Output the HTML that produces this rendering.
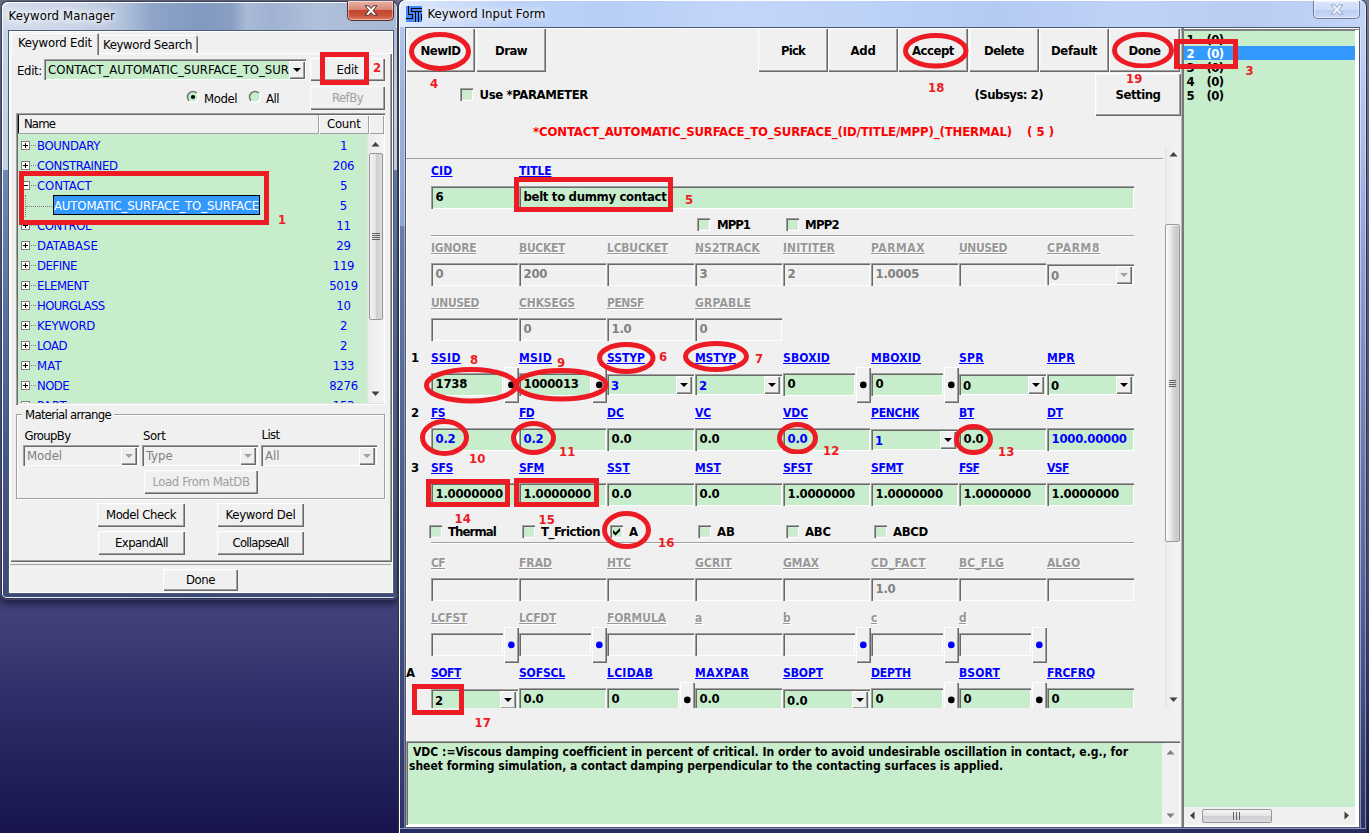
<!DOCTYPE html>
<html><head><meta charset="utf-8"><title>Keyword Input Form</title>
<style>
html,body{margin:0;padding:0;}
body{width:1369px;height:833px;overflow:hidden;position:relative;font-family:"DejaVu Sans Condensed","Liberation Sans",sans-serif;font-size:13px;
background:linear-gradient(to bottom,#7a7a92 0,#56567f 300px,#45457e 600px,#2f2e68 700px,#18154d 833px);}
#root{position:absolute;left:0;top:0;width:1369px;height:833px;overflow:hidden;}
#root div,#root span.t,#root svg{position:absolute;}
#root div{box-sizing:border-box;}
span.t{white-space:pre;}
</style></head>
<body><div id="root">
<div style="left:0px;top:0px;width:399px;height:600px;border-radius:8px 8px 7px 7px;background:rgba(60,64,90,.45);box-shadow:0 3px 9px 1px rgba(8,8,35,.7);"></div>
<div style="left:1px;top:1px;width:397px;height:598px;border-radius:7px 7px 6px 6px;background:linear-gradient(to bottom,#3a4258 0,#2a3350 100%);"></div>
<div style="left:2px;top:2px;width:395px;height:596px;border-radius:6px 6px 5px 5px;background:linear-gradient(to right,#d3dcec 0,#c9d4e7 20%,#b4c3dc 30%,#8ea4c9 38%,#8299c1 50%,#889ec4 58%,#a9bad7 62%,#a0b2d2 68%,#b0c0db 80%,#a7b8d5 100%);box-shadow:inset 1px 1px 0 rgba(255,255,255,.9),inset -1px -1px 0 rgba(255,255,255,.55);"></div>
<div style="left:3px;top:28px;width:5px;height:567px;background:linear-gradient(to bottom,#c9d5e8 0,#c3cfe4 142px,#7088b5 142px,#5f76a6 250px,#46578a 430px,#3d4c76 567px);"></div>
<div style="left:394px;top:28px;width:3px;height:567px;background:linear-gradient(to bottom,#a9bad7 0,#c0cce0 60px,#c0cce0 142px,#5f76a6 142px,#4f6394 300px,#3d4c76 567px);"></div>
<div style="left:3px;top:594px;width:394px;height:3px;background:#3d4c76;border-radius:0 0 3px 3px;"></div>
<div style="left:8px;top:30px;width:386px;height:564px;background:#f0f0f0;border:1px solid #4d5a74;box-shadow:inset 1px 1px 0 #fff,inset -1px -1px 0 #fff;"></div>
<span id="t0" class="t" style="left:8.5px;top:8px;font-size:13px;line-height:16px;color:#000;letter-spacing:0.109px;text-shadow:0 0 6px #fff,0 0 8px #fff,0 0 10px #fff;">Keyword Manager</span>
<div style="left:347px;top:1px;width:47px;height:20px;border-radius:0 0 5px 5px;border:1px solid #5a2a2a;border-top:none;background:linear-gradient(to bottom,#e8b4a8 0,#d98876 45%,#c4452e 50%,#c9523a 75%,#dd7c62 100%);box-shadow:inset 0 0 0 1px rgba(255,255,255,.45);"></div>
<svg style="left:364px;top:5px;" width="14" height="11" viewBox="0 0 14 11"><path d="M1 0.8 L4.9 0.8 L7 3.5 L9.1 0.8 L13 0.8 L9 5.5 L13 10.2 L9.1 10.2 L7 7.5 L4.9 10.2 L1 10.2 L5 5.5 Z" fill="#fff" stroke="#4a2e2e" stroke-width="1"/></svg>
<div style="left:10px;top:53px;width:382px;height:509px;background:#f0f0f0;box-shadow:inset 1px 1px 0 #fff,inset -1px -1px 0 #696969,inset -2px -2px 0 #a0a0a0;"></div>
<div style="left:11px;top:33px;width:88px;height:22px;background:#f0f0f0;border-radius:2px 2px 0 0;box-shadow:inset 1px 1px 0 #fff,inset -1px 0 0 #696969,inset -2px 0 0 #a0a0a0;"></div>
<div style="left:12px;top:53px;width:85px;height:3px;background:#f0f0f0;"></div>
<span id="t1" class="t" style="left:18px;top:35px;font-size:13px;line-height:16px;color:#000;letter-spacing:-0.186px;">Keyword Edit</span>
<div style="left:99px;top:35px;width:99px;height:18px;background:#f0f0f0;border-radius:2px 2px 0 0;box-shadow:inset 0 1px 0 #fff,inset -1px 0 0 #696969,inset -2px 0 0 #a0a0a0;"></div>
<span id="t2" class="t" style="left:103px;top:37px;font-size:13px;line-height:16px;color:#000;letter-spacing:-0.338px;">Keyword Search</span>
<div style="left:10px;top:564px;width:381px;height:1px;background:#a0a0a0;"></div>
<span id="t3" class="t" style="left:17px;top:63px;font-size:13px;line-height:16px;color:#000;letter-spacing:-0.319px;">Edit:</span>
<div style="left:44px;top:59px;width:262px;height:21px;background:#c7edcc;box-shadow:inset 1px 1px 0 #a0a0a0,inset 2px 2px 0 #696969,inset -1px -1px 0 #fff;"></div>
<span id="t4" class="t" style="left:48px;top:62px;font-size:13px;line-height:16px;color:#000;letter-spacing:0.003px;">CONTACT_AUTOMATIC_SURFACE_TO_SUR</span>
<div style="left:289px;top:61px;width:16px;height:18px;background:#f0f0f0;box-shadow:inset 1px 1px 0 #fff,inset -1px -1px 0 #696969,inset -2px -2px 0 #a0a0a0;"></div>
<svg style="left:292px;top:66px;" width="10" height="8" viewBox="0 0 10 8"><path d="M1 2 L9 2 L5 6 Z" fill="#000"/></svg>
<div style="left:310px;top:58px;width:75px;height:23px;background:#f0f0f0;box-shadow:inset 1px 1px 0 #fff,inset -1px -1px 0 #696969,inset -2px -2px 0 #a0a0a0,inset 2px 2px 0 #f4f4f4;"></div>
<span id="t5" class="t" style="left:347.5px;top:62px;font-size:13px;line-height:16px;color:#000;letter-spacing:-0.164px;transform:translateX(-50%);">Edit</span>
<div style="left:310px;top:86px;width:75px;height:24px;background:#f0f0f0;box-shadow:inset 1px 1px 0 #fff,inset -1px -1px 0 #696969,inset -2px -2px 0 #a0a0a0,inset 2px 2px 0 #f4f4f4;"></div>
<span id="t6" class="t" style="left:347.5px;top:90px;font-size:13px;line-height:16px;color:#a0a0a0;letter-spacing:-0.559px;transform:translateX(-50%);">RefBy</span>
<svg style="left:186px;top:90px;" width="14" height="14" viewBox="0 0 14 14"><circle cx="7" cy="7" r="5.2" fill="#c7edcc"/><path d="M3.1 10.9 A5.5 5.5 0 0 1 10.9 3.1" fill="none" stroke="#767676" stroke-width="1.5"/><path d="M10.9 3.1 A5.5 5.5 0 0 1 3.1 10.9" fill="none" stroke="#fff" stroke-width="1.5"/><circle cx="7" cy="7" r="2.1" fill="#000"/></svg>
<span id="t7" class="t" style="left:204px;top:91px;font-size:13px;line-height:16px;color:#000;letter-spacing:-0.425px;">Model</span>
<svg style="left:248px;top:90px;" width="14" height="14" viewBox="0 0 14 14"><circle cx="7" cy="7" r="5.2" fill="#c7edcc"/><path d="M3.1 10.9 A5.5 5.5 0 0 1 10.9 3.1" fill="none" stroke="#767676" stroke-width="1.5"/><path d="M10.9 3.1 A5.5 5.5 0 0 1 3.1 10.9" fill="none" stroke="#fff" stroke-width="1.5"/></svg>
<span id="t8" class="t" style="left:266px;top:91px;font-size:13px;line-height:16px;color:#000;letter-spacing:-0.500px;">All</span>
<div style="left:16px;top:113px;width:369px;height:292px;background:#fff;box-shadow:inset 1px 1px 0 #a0a0a0,inset 2px 2px 0 #696969,inset -1px -1px 0 #fff,inset -2px -2px 0 #e3e3e3;"></div>
<div style="left:18px;top:134px;width:349px;height:269px;background:#c7edcc;"></div>
<div style="left:18px;top:115px;width:301px;height:19px;background:#f0f0f0;box-shadow:inset -1px -1px 0 #a0a0a0,inset 1px 0 0 #000;"></div>
<div style="left:319px;top:115px;width:50px;height:19px;background:#f0f0f0;box-shadow:inset 1px 1px 0 #fff,inset -1px -1px 0 #a0a0a0;"></div>
<div style="left:369px;top:115px;width:15px;height:19px;background:#f0f0f0;box-shadow:inset 1px 1px 0 #fff,inset -1px -1px 0 #a0a0a0;"></div>
<span id="t9" class="t" style="left:24px;top:116px;font-size:13px;line-height:16px;color:#000;letter-spacing:-0.879px;">Name</span>
<span id="t10" class="t" style="left:327px;top:116px;font-size:13px;line-height:16px;color:#000;letter-spacing:-0.247px;">Count</span>
<div style="left:367px;top:134px;width:17px;height:269px;background:linear-gradient(to right,#e2e2e2 0,#ececec 2px,#f0f0f0 50%,#f3f3f3 100%);"></div>
<svg style="left:371px;top:141px;" width="9" height="6" viewBox="0 0 9 6"><path d="M0.5 5.5 L4.5 1 L8.5 5.5 Z" fill="#404040"/></svg>
<svg style="left:371px;top:391px;" width="9" height="6" viewBox="0 0 9 6"><path d="M0.5 0.5 L8.5 0.5 L4.5 5 Z" fill="#404040"/></svg>
<div style="left:369px;top:153px;width:14px;height:167px;border:1px solid #979797;border-radius:2px;background:linear-gradient(to right,#f4f4f4 0,#e6e6e8 45%,#cfcfd3 55%,#dcdce0 100%);"></div>
<div style="left:372px;top:233px;width:8px;height:1px;background:#606060;"></div>
<div style="left:372px;top:235px;width:8px;height:1px;background:#606060;"></div>
<div style="left:372px;top:237px;width:8px;height:1px;background:#606060;"></div>
<div style="left:372px;top:239px;width:8px;height:1px;background:#606060;"></div>
<div style="left:18px;top:134px;width:349px;height:269px;overflow:hidden;">
<div style="left:3px;top:7px;width:9px;height:9px;background:#fff;border:1px solid #808080;"></div>
<div style="left:5px;top:11px;width:5px;height:1px;background:#000;"></div>
<div style="left:7px;top:9px;width:1px;height:5px;background:#000;"></div>
<div style="left:13px;top:11px;width:5px;height:1px;border-top:1px dotted #808080;"></div>
<span id="t11" class="t" style="left:19px;top:4px;font-size:13px;line-height:16px;color:#0000ff;letter-spacing:-0.316px;">BOUNDARY</span>
<span id="t12" class="t" style="left:325.5px;top:4px;font-size:13px;line-height:16px;color:#0000ff;transform:translateX(-50%);letter-spacing:-0.3px;">1</span>
<div style="left:3px;top:27px;width:9px;height:9px;background:#fff;border:1px solid #808080;"></div>
<div style="left:5px;top:31px;width:5px;height:1px;background:#000;"></div>
<div style="left:7px;top:29px;width:1px;height:5px;background:#000;"></div>
<div style="left:13px;top:31px;width:5px;height:1px;border-top:1px dotted #808080;"></div>
<span id="t13" class="t" style="left:19px;top:24px;font-size:13px;line-height:16px;color:#0000ff;letter-spacing:-0.398px;">CONSTRAINED</span>
<span id="t14" class="t" style="left:325.5px;top:24px;font-size:13px;line-height:16px;color:#0000ff;transform:translateX(-50%);letter-spacing:-0.3px;">206</span>
<div style="left:3px;top:47px;width:9px;height:9px;background:#fff;border:1px solid #808080;"></div>
<div style="left:5px;top:51px;width:5px;height:1px;background:#000;"></div>
<div style="left:13px;top:51px;width:5px;height:1px;border-top:1px dotted #808080;"></div>
<span id="t15" class="t" style="left:19px;top:44px;font-size:13px;line-height:16px;color:#0000ff;letter-spacing:-0.121px;">CONTACT</span>
<span id="t16" class="t" style="left:325.5px;top:44px;font-size:13px;line-height:16px;color:#0000ff;transform:translateX(-50%);letter-spacing:-0.3px;">5</span>
<div style="left:8px;top:72px;width:26px;height:1px;background:#808080;"></div>
<div style="left:7px;top:61px;width:1px;height:22px;border-left:1px dotted #808080;"></div>
<div style="left:8px;top:72px;width:26px;height:1px;background:#c7edcc;border-top:1px dotted #808080;"></div>
<div style="left:35px;top:61px;width:207px;height:20px;background:#3399ff;border:1px solid #000;"></div>
<span id="t17" class="t" style="left:36px;top:64px;font-size:13px;line-height:16px;color:#fff;letter-spacing:-0.128px;">AUTOMATIC_SURFACE_TO_SURFACE</span>
<span id="t18" class="t" style="left:325.5px;top:64px;font-size:13px;line-height:16px;color:#0000ff;transform:translateX(-50%);">5</span>
<div style="left:3px;top:87px;width:9px;height:9px;background:#fff;border:1px solid #808080;"></div>
<div style="left:5px;top:91px;width:5px;height:1px;background:#000;"></div>
<div style="left:7px;top:89px;width:1px;height:5px;background:#000;"></div>
<div style="left:13px;top:91px;width:5px;height:1px;border-top:1px dotted #808080;"></div>
<span id="t19" class="t" style="left:19px;top:84px;font-size:13px;line-height:16px;color:#0000ff;letter-spacing:-0.444px;">CONTROL</span>
<span id="t20" class="t" style="left:325.5px;top:84px;font-size:13px;line-height:16px;color:#0000ff;transform:translateX(-50%);letter-spacing:-0.3px;">11</span>
<div style="left:3px;top:107px;width:9px;height:9px;background:#fff;border:1px solid #808080;"></div>
<div style="left:5px;top:111px;width:5px;height:1px;background:#000;"></div>
<div style="left:7px;top:109px;width:1px;height:5px;background:#000;"></div>
<div style="left:13px;top:111px;width:5px;height:1px;border-top:1px dotted #808080;"></div>
<span id="t21" class="t" style="left:19px;top:104px;font-size:13px;line-height:16px;color:#0000ff;letter-spacing:0.033px;">DATABASE</span>
<span id="t22" class="t" style="left:325.5px;top:104px;font-size:13px;line-height:16px;color:#0000ff;transform:translateX(-50%);letter-spacing:-0.3px;">29</span>
<div style="left:3px;top:127px;width:9px;height:9px;background:#fff;border:1px solid #808080;"></div>
<div style="left:5px;top:131px;width:5px;height:1px;background:#000;"></div>
<div style="left:7px;top:129px;width:1px;height:5px;background:#000;"></div>
<div style="left:13px;top:131px;width:5px;height:1px;border-top:1px dotted #808080;"></div>
<span id="t23" class="t" style="left:19px;top:124px;font-size:13px;line-height:16px;color:#0000ff;letter-spacing:-0.453px;">DEFINE</span>
<span id="t24" class="t" style="left:325.5px;top:124px;font-size:13px;line-height:16px;color:#0000ff;transform:translateX(-50%);letter-spacing:-0.3px;">119</span>
<div style="left:3px;top:147px;width:9px;height:9px;background:#fff;border:1px solid #808080;"></div>
<div style="left:5px;top:151px;width:5px;height:1px;background:#000;"></div>
<div style="left:7px;top:149px;width:1px;height:5px;background:#000;"></div>
<div style="left:13px;top:151px;width:5px;height:1px;border-top:1px dotted #808080;"></div>
<span id="t25" class="t" style="left:19px;top:144px;font-size:13px;line-height:16px;color:#0000ff;letter-spacing:-0.453px;">ELEMENT</span>
<span id="t26" class="t" style="left:325.5px;top:144px;font-size:13px;line-height:16px;color:#0000ff;transform:translateX(-50%);letter-spacing:-0.3px;">5019</span>
<div style="left:3px;top:167px;width:9px;height:9px;background:#fff;border:1px solid #808080;"></div>
<div style="left:5px;top:171px;width:5px;height:1px;background:#000;"></div>
<div style="left:7px;top:169px;width:1px;height:5px;background:#000;"></div>
<div style="left:13px;top:171px;width:5px;height:1px;border-top:1px dotted #808080;"></div>
<span id="t27" class="t" style="left:19px;top:164px;font-size:13px;line-height:16px;color:#0000ff;letter-spacing:-0.658px;">HOURGLASS</span>
<span id="t28" class="t" style="left:325.5px;top:164px;font-size:13px;line-height:16px;color:#0000ff;transform:translateX(-50%);letter-spacing:-0.3px;">10</span>
<div style="left:3px;top:187px;width:9px;height:9px;background:#fff;border:1px solid #808080;"></div>
<div style="left:5px;top:191px;width:5px;height:1px;background:#000;"></div>
<div style="left:7px;top:189px;width:1px;height:5px;background:#000;"></div>
<div style="left:13px;top:191px;width:5px;height:1px;border-top:1px dotted #808080;"></div>
<span id="t29" class="t" style="left:19px;top:184px;font-size:13px;line-height:16px;color:#0000ff;letter-spacing:-0.301px;">KEYWORD</span>
<span id="t30" class="t" style="left:325.5px;top:184px;font-size:13px;line-height:16px;color:#0000ff;transform:translateX(-50%);letter-spacing:-0.3px;">2</span>
<div style="left:3px;top:207px;width:9px;height:9px;background:#fff;border:1px solid #808080;"></div>
<div style="left:5px;top:211px;width:5px;height:1px;background:#000;"></div>
<div style="left:7px;top:209px;width:1px;height:5px;background:#000;"></div>
<div style="left:13px;top:211px;width:5px;height:1px;border-top:1px dotted #808080;"></div>
<span id="t31" class="t" style="left:19px;top:204px;font-size:13px;line-height:16px;color:#0000ff;letter-spacing:-0.508px;">LOAD</span>
<span id="t32" class="t" style="left:325.5px;top:204px;font-size:13px;line-height:16px;color:#0000ff;transform:translateX(-50%);letter-spacing:-0.3px;">2</span>
<div style="left:3px;top:227px;width:9px;height:9px;background:#fff;border:1px solid #808080;"></div>
<div style="left:5px;top:231px;width:5px;height:1px;background:#000;"></div>
<div style="left:7px;top:229px;width:1px;height:5px;background:#000;"></div>
<div style="left:13px;top:231px;width:5px;height:1px;border-top:1px dotted #808080;"></div>
<span id="t33" class="t" style="left:19px;top:224px;font-size:13px;line-height:16px;color:#0000ff;letter-spacing:0.255px;">MAT</span>
<span id="t34" class="t" style="left:325.5px;top:224px;font-size:13px;line-height:16px;color:#0000ff;transform:translateX(-50%);letter-spacing:-0.3px;">133</span>
<div style="left:3px;top:247px;width:9px;height:9px;background:#fff;border:1px solid #808080;"></div>
<div style="left:5px;top:251px;width:5px;height:1px;background:#000;"></div>
<div style="left:7px;top:249px;width:1px;height:5px;background:#000;"></div>
<div style="left:13px;top:251px;width:5px;height:1px;border-top:1px dotted #808080;"></div>
<span id="t35" class="t" style="left:19px;top:244px;font-size:13px;line-height:16px;color:#0000ff;letter-spacing:-0.590px;">NODE</span>
<span id="t36" class="t" style="left:325.5px;top:244px;font-size:13px;line-height:16px;color:#0000ff;transform:translateX(-50%);letter-spacing:-0.3px;">8276</span>
<div style="left:3px;top:267px;width:9px;height:9px;background:#fff;border:1px solid #808080;"></div>
<div style="left:5px;top:271px;width:5px;height:1px;background:#000;"></div>
<div style="left:7px;top:269px;width:1px;height:5px;background:#000;"></div>
<div style="left:13px;top:271px;width:5px;height:1px;border-top:1px dotted #808080;"></div>
<span id="t37" class="t" style="left:19px;top:264px;font-size:13px;line-height:16px;color:#0000ff;letter-spacing:0.363px;">PART</span>
<span id="t38" class="t" style="left:325.5px;top:264px;font-size:13px;line-height:16px;color:#0000ff;transform:translateX(-50%);letter-spacing:-0.3px;">153</span>
</div>
<div style="left:16px;top:414px;width:369px;height:85px;border:1px solid #a0a0a0;box-shadow:inset 1px 1px 0 #fff,1px 1px 0 #fff;"></div>
<div style="left:22px;top:408px;width:92px;height:14px;background:#f0f0f0;"></div>
<span id="t39" class="t" style="left:25px;top:407px;font-size:13px;line-height:16px;color:#000;letter-spacing:-0.687px;">Material arrange</span>
<span id="t40" class="t" style="left:24.5px;top:428px;font-size:13px;line-height:16px;color:#000;letter-spacing:-0.647px;">GroupBy</span>
<span id="t41" class="t" style="left:143px;top:428px;font-size:13px;line-height:16px;color:#000;letter-spacing:-0.367px;">Sort</span>
<span id="t42" class="t" style="left:261.5px;top:427px;font-size:13px;line-height:16px;color:#000;letter-spacing:-0.613px;">List</span>
<div style="left:23px;top:445px;width:116px;height:21px;background:#f0f0f0;box-shadow:inset 1px 1px 0 #a0a0a0,inset 2px 2px 0 #696969,inset -1px -1px 0 #fff;"></div>
<div style="left:121px;top:447px;width:16px;height:18px;background:#f0f0f0;box-shadow:inset 1px 1px 0 #fff,inset -1px -1px 0 #696969,inset -2px -2px 0 #a0a0a0;"></div>
<svg style="left:124px;top:452.0px;" width="10" height="8" viewBox="0 0 10 8"><path d="M1 2 L9 2 L5 6 Z" fill="#a0a0a0"/></svg>
<span id="t43" class="t" style="left:27px;top:448.4px;font-size:13px;line-height:16px;color:#808080;">Model</span>
<div style="left:142px;top:445px;width:116px;height:21px;background:#f0f0f0;box-shadow:inset 1px 1px 0 #a0a0a0,inset 2px 2px 0 #696969,inset -1px -1px 0 #fff;"></div>
<div style="left:240px;top:447px;width:16px;height:18px;background:#f0f0f0;box-shadow:inset 1px 1px 0 #fff,inset -1px -1px 0 #696969,inset -2px -2px 0 #a0a0a0;"></div>
<svg style="left:243px;top:452.0px;" width="10" height="8" viewBox="0 0 10 8"><path d="M1 2 L9 2 L5 6 Z" fill="#a0a0a0"/></svg>
<span id="t44" class="t" style="left:146px;top:448.4px;font-size:13px;line-height:16px;color:#808080;">Type</span>
<div style="left:261px;top:445px;width:116px;height:21px;background:#f0f0f0;box-shadow:inset 1px 1px 0 #a0a0a0,inset 2px 2px 0 #696969,inset -1px -1px 0 #fff;"></div>
<div style="left:359px;top:447px;width:16px;height:18px;background:#f0f0f0;box-shadow:inset 1px 1px 0 #fff,inset -1px -1px 0 #696969,inset -2px -2px 0 #a0a0a0;"></div>
<svg style="left:362px;top:452.0px;" width="10" height="8" viewBox="0 0 10 8"><path d="M1 2 L9 2 L5 6 Z" fill="#a0a0a0"/></svg>
<span id="t45" class="t" style="left:265px;top:448.4px;font-size:13px;line-height:16px;color:#808080;">All</span>
<div style="left:144px;top:470px;width:114px;height:24px;background:#f0f0f0;box-shadow:inset 1px 1px 0 #fff,inset -1px -1px 0 #696969,inset -2px -2px 0 #a0a0a0,inset 2px 2px 0 #f4f4f4;"></div>
<span id="t46" class="t" style="left:201.0px;top:474px;font-size:13px;line-height:16px;color:#a0a0a0;letter-spacing:-0.412px;transform:translateX(-50%);">Load From MatDB</span>
<div style="left:97px;top:503px;width:88px;height:24px;background:#f0f0f0;box-shadow:inset 1px 1px 0 #fff,inset -1px -1px 0 #696969,inset -2px -2px 0 #a0a0a0,inset 2px 2px 0 #f4f4f4;"></div>
<span id="t47" class="t" style="left:141.0px;top:507px;font-size:13px;line-height:16px;color:#000;letter-spacing:-0.439px;transform:translateX(-50%);">Model Check</span>
<div style="left:217px;top:503px;width:87px;height:24px;background:#f0f0f0;box-shadow:inset 1px 1px 0 #fff,inset -1px -1px 0 #696969,inset -2px -2px 0 #a0a0a0,inset 2px 2px 0 #f4f4f4;"></div>
<span id="t48" class="t" style="left:260.5px;top:507px;font-size:13px;line-height:16px;color:#000;letter-spacing:-0.276px;transform:translateX(-50%);">Keyword Del</span>
<div style="left:98px;top:531px;width:87px;height:24px;background:#f0f0f0;box-shadow:inset 1px 1px 0 #fff,inset -1px -1px 0 #696969,inset -2px -2px 0 #a0a0a0,inset 2px 2px 0 #f4f4f4;"></div>
<span id="t49" class="t" style="left:141.5px;top:535px;font-size:13px;line-height:16px;color:#000;letter-spacing:-0.583px;transform:translateX(-50%);">ExpandAll</span>
<div style="left:217px;top:531px;width:87px;height:24px;background:#f0f0f0;box-shadow:inset 1px 1px 0 #fff,inset -1px -1px 0 #696969,inset -2px -2px 0 #a0a0a0,inset 2px 2px 0 #f4f4f4;"></div>
<span id="t50" class="t" style="left:260.5px;top:535px;font-size:13px;line-height:16px;color:#000;letter-spacing:-0.747px;transform:translateX(-50%);">CollapseAll</span>
<div style="left:163px;top:569px;width:75px;height:22px;background:#f0f0f0;box-shadow:inset 1px 1px 0 #fff,inset -1px -1px 0 #696969,inset -2px -2px 0 #a0a0a0,inset 2px 2px 0 #f4f4f4;"></div>
<span id="t51" class="t" style="left:200.5px;top:572px;font-size:13px;line-height:16px;color:#000;letter-spacing:-0.445px;transform:translateX(-50%);">Done</span>
<div style="left:19px;top:171px;width:250px;height:54px;border:5px solid #ed1c24;box-sizing:border-box;"></div>
<span id="t52" class="t" style="left:278px;top:212px;font-size:13px;line-height:16px;color:#ed1c24;font-weight:bold;">1</span>
<div style="left:320px;top:52px;width:49px;height:33px;border:5px solid #ed1c24;box-sizing:border-box;"></div>
<span id="t53" class="t" style="left:373px;top:60px;font-size:13px;line-height:16px;color:#ed1c24;font-weight:bold;">2</span>
<div style="left:398px;top:-1px;width:969px;height:841px;border-radius:8px 8px 0 0;background:#2b3247;"></div>
<div style="left:399px;top:0px;width:967px;height:841px;border-radius:7px 7px 0 0;background:linear-gradient(to right,#e2ebfb 0,#cfdefa 5%,#bdd2f7 12%,#b8cef6 22%,#c3d6fa 35%,#bcd1f7 50%,#b5caf2 62%,#bfd3f8 75%,#b9cdf3 88%,#c3d5f7 100%);box-shadow:inset 1px 1px 0 rgba(255,255,255,.95),inset -1px 0 0 rgba(255,255,255,.55);"></div>
<div style="left:400px;top:27px;width:5px;height:806px;background:linear-gradient(to bottom,#b4c6ea 0,#9fb3d9 60px,#8fa6cf 199px,#6a7ea8 199px,#52638f 420px,#434f7e 600px,#3a4378 700px,#2a3166 806px);box-shadow:inset -1px 0 0 rgba(255,255,255,.35);"></div>
<div style="left:1360px;top:27px;width:6px;height:806px;background:linear-gradient(to bottom,#c0d3f5 0,#a9bbea 120px,#8fa0d5 230px,#6f80b1 400px,#4a5890 620px,#2a3166 800px);box-shadow:inset 1px 0 0 rgba(255,255,255,.45),inset -1px 0 0 rgba(255,255,255,.4);"></div>
<div style="left:400px;top:828px;width:966px;height:5px;background:#252c61;border-top:1px solid #8c95c4;"></div>
<div style="left:405px;top:27px;width:955px;height:801px;background:#f0f0f0;border:1px solid #4d5873;box-shadow:inset 1px 1px 0 #fff,inset -1px -2px 0 #fff;"></div>
<svg style="left:406px;top:6px;" width="16" height="16" viewBox="0 0 16 16"><rect width="16" height="16" fill="#4488ff"/><path d="M2.5 0V8.5H6.5V12.5H0M16 2.5H5.5V5.5H16M9.5 5.5V16M12.5 5.5V16M15.5 8V14" fill="none" stroke="#000" stroke-width="1" shape-rendering="crispEdges"/></svg>
<span id="t54" class="t" style="left:427.5px;top:6px;font-size:13px;line-height:16px;color:#000;letter-spacing:0.057px;text-shadow:0 0 6px #fff,0 0 8px #fff;">Keyword Input Form</span>
<div style="left:1313px;top:1px;width:47px;height:18px;border-radius:0 0 5px 5px;border:1px solid #6f7b96;border-top:none;background:linear-gradient(to bottom,#dbe6fb 0,#cddcf8 50%,#bccef2 55%,#c9d9f7 100%);box-shadow:inset 0 0 0 1px rgba(255,255,255,.55);"></div>
<svg style="left:1330px;top:4px;" width="14" height="11" viewBox="0 0 14 11"><path d="M1 0.8 L4.9 0.8 L7 3.5 L9.1 0.8 L13 0.8 L9 5.5 L13 10.2 L9.1 10.2 L7 7.5 L4.9 10.2 L1 10.2 L5 5.5 Z" fill="#eef3fc" stroke="#93a1bd" stroke-width="0.9"/></svg>
<div style="left:406px;top:28px;width:69px;height:44px;background:#f0f0f0;box-shadow:inset 1px 1px 0 #fff,inset -1px -1px 0 #696969,inset -2px -2px 0 #a0a0a0,inset 2px 2px 0 #f4f4f4;"></div>
<span id="t55" class="t" style="left:440.5px;top:43px;font-size:13px;line-height:16px;color:#000;font-weight:bold;letter-spacing:-0.519px;transform:translateX(-50%);">NewID</span>
<div style="left:476px;top:28px;width:70px;height:44px;background:#f0f0f0;box-shadow:inset 1px 1px 0 #fff,inset -1px -1px 0 #696969,inset -2px -2px 0 #a0a0a0,inset 2px 2px 0 #f4f4f4;"></div>
<span id="t56" class="t" style="left:511.0px;top:43px;font-size:13px;line-height:16px;color:#000;font-weight:bold;letter-spacing:-0.547px;transform:translateX(-50%);">Draw</span>
<div style="left:758px;top:28px;width:70px;height:44px;background:#f0f0f0;box-shadow:inset 1px 1px 0 #fff,inset -1px -1px 0 #696969,inset -2px -2px 0 #a0a0a0,inset 2px 2px 0 #f4f4f4;"></div>
<span id="t57" class="t" style="left:793.0px;top:43px;font-size:13px;line-height:16px;color:#000;font-weight:bold;letter-spacing:-0.824px;transform:translateX(-50%);">Pick</span>
<div style="left:828px;top:28px;width:70px;height:44px;background:#f0f0f0;box-shadow:inset 1px 1px 0 #fff,inset -1px -1px 0 #696969,inset -2px -2px 0 #a0a0a0,inset 2px 2px 0 #f4f4f4;"></div>
<span id="t58" class="t" style="left:863.0px;top:43px;font-size:13px;line-height:16px;color:#000;font-weight:bold;letter-spacing:-0.266px;transform:translateX(-50%);">Add</span>
<div style="left:898px;top:28px;width:70px;height:44px;background:#f0f0f0;box-shadow:inset 1px 1px 0 #fff,inset -1px -1px 0 #696969,inset -2px -2px 0 #a0a0a0,inset 2px 2px 0 #f4f4f4;"></div>
<span id="t59" class="t" style="left:933.0px;top:43px;font-size:13px;line-height:16px;color:#000;font-weight:bold;letter-spacing:-0.471px;transform:translateX(-50%);">Accept</span>
<div style="left:969px;top:28px;width:70px;height:44px;background:#f0f0f0;box-shadow:inset 1px 1px 0 #fff,inset -1px -1px 0 #696969,inset -2px -2px 0 #a0a0a0,inset 2px 2px 0 #f4f4f4;"></div>
<span id="t60" class="t" style="left:1004.0px;top:43px;font-size:13px;line-height:16px;color:#000;font-weight:bold;letter-spacing:-0.521px;transform:translateX(-50%);">Delete</span>
<div style="left:1039px;top:28px;width:70px;height:44px;background:#f0f0f0;box-shadow:inset 1px 1px 0 #fff,inset -1px -1px 0 #696969,inset -2px -2px 0 #a0a0a0,inset 2px 2px 0 #f4f4f4;"></div>
<span id="t61" class="t" style="left:1074.0px;top:43px;font-size:13px;line-height:16px;color:#000;font-weight:bold;letter-spacing:-0.364px;transform:translateX(-50%);">Default</span>
<div style="left:1109px;top:28px;width:71px;height:44px;background:#f0f0f0;box-shadow:inset 1px 1px 0 #fff,inset -1px -1px 0 #696969,inset -2px -2px 0 #a0a0a0,inset 2px 2px 0 #f4f4f4;"></div>
<span id="t62" class="t" style="left:1144.5px;top:43px;font-size:13px;line-height:16px;color:#000;font-weight:bold;letter-spacing:-0.504px;transform:translateX(-50%);">Done</span>
<div style="left:1095px;top:73px;width:86px;height:43px;background:#f0f0f0;box-shadow:inset 1px 1px 0 #fff,inset -1px -1px 0 #696969,inset -2px -2px 0 #a0a0a0,inset 2px 2px 0 #f4f4f4;"></div>
<span id="t63" class="t" style="left:1138px;top:87px;font-size:13px;line-height:16px;color:#000;font-weight:bold;letter-spacing:-0.464px;transform:translateX(-50%);">Setting</span>
<div style="left:460px;top:88px;width:13px;height:13px;background:#c7edcc;box-shadow:inset 1px 1px 0 #a0a0a0,inset 2px 2px 0 #696969,inset -1px -1px 0 #fff,inset -2px -2px 0 #e3e3e3;"></div>
<span id="t64" class="t" style="left:479.5px;top:87px;font-size:13px;line-height:16px;color:#000;font-weight:bold;letter-spacing:-0.371px;">Use *PARAMETER</span>
<span id="t65" class="t" style="left:974.5px;top:87px;font-size:13px;line-height:16px;color:#000;font-weight:bold;letter-spacing:-0.523px;">(Subsys: 2)</span>
<span id="t66" class="t" style="left:533px;top:124px;font-size:13px;line-height:16px;color:#ff0000;font-weight:bold;letter-spacing:-0.116px;">*CONTACT_AUTOMATIC_SURFACE_TO_SURFACE_(ID/TITLE/MPP)_(THERMAL)</span>
<span id="t67" class="t" style="left:1027px;top:124px;font-size:13px;line-height:16px;color:#ff0000;font-weight:bold;letter-spacing:0.006px;">( 5 )</span>
<div style="left:406px;top:158px;width:757px;height:1px;background:#a0a0a0;"></div>
<div style="left:1165px;top:146px;width:15px;height:562px;background:linear-gradient(to right,#e2e2e2 0,#ececec 2px,#f0f0f0 50%,#f3f3f3 100%);"></div>
<svg style="left:1169px;top:151px;" width="9" height="6" viewBox="0 0 9 6"><path d="M0.5 5.5 L4.5 1 L8.5 5.5 Z" fill="#404040"/></svg>
<svg style="left:1169px;top:697px;" width="9" height="6" viewBox="0 0 9 6"><path d="M0.5 0.5 L8.5 0.5 L4.5 5 Z" fill="#404040"/></svg>
<div style="left:1165px;top:224px;width:15px;height:318px;border:1px solid #9a9a9a;border-radius:2px;background:linear-gradient(to right,#f7f7f7 0,#ececed 35%,#dadadc 50%,#c8c8cc 85%,#d4d4d8 100%);box-shadow:inset 1px 1px 0 rgba(255,255,255,.7);"></div>
<div style="left:1169px;top:380px;width:7px;height:1px;background:#606060;"></div>
<div style="left:1169px;top:382px;width:7px;height:1px;background:#606060;"></div>
<div style="left:1169px;top:384px;width:7px;height:1px;background:#606060;"></div>
<div style="left:1169px;top:386px;width:7px;height:1px;background:#606060;"></div>
<div style="left:406px;top:159px;width:759px;height:549px;overflow:hidden;">
<span id="t68" class="t" style="left:25px;top:4px;font-size:12px;line-height:16px;color:#0000ff;font-weight:bold;text-decoration:underline;letter-spacing:0.198px;">CID</span>
<span id="t69" class="t" style="left:113px;top:4px;font-size:12px;line-height:16px;color:#0000ff;font-weight:bold;text-decoration:underline;letter-spacing:-0.100px;">TITLE</span>
<div style="left:25px;top:27px;width:88px;height:23px;background:#c7edcc;box-shadow:inset 1px 1px 0 #a0a0a0,inset 2px 2px 0 #696969,inset -1px -1px 0 #fff;"></div>
<span id="t70" class="t" style="left:29.5px;top:30px;font-size:13px;line-height:16px;color:#000;font-weight:bold;letter-spacing:-0.25px;">6</span>
<div style="left:113px;top:27px;width:615px;height:23px;background:#c7edcc;box-shadow:inset 1px 1px 0 #a0a0a0,inset 2px 2px 0 #696969,inset -1px -1px 0 #fff;"></div>
<span id="t71" class="t" style="left:117.5px;top:30px;font-size:13px;line-height:16px;color:#000;font-weight:bold;letter-spacing:-0.321px;">belt to dummy contact</span>
<div style="left:291px;top:59px;width:13px;height:13px;background:#c7edcc;box-shadow:inset 1px 1px 0 #a0a0a0,inset 2px 2px 0 #696969,inset -1px -1px 0 #fff,inset -2px -2px 0 #e3e3e3;"></div>
<span id="t72" class="t" style="left:311px;top:58px;font-size:13px;line-height:16px;color:#000;font-weight:bold;letter-spacing:-0.980px;">MPP1</span>
<div style="left:380px;top:59px;width:13px;height:13px;background:#c7edcc;box-shadow:inset 1px 1px 0 #a0a0a0,inset 2px 2px 0 #696969,inset -1px -1px 0 #fff,inset -2px -2px 0 #e3e3e3;"></div>
<span id="t73" class="t" style="left:399px;top:58px;font-size:13px;line-height:16px;color:#000;font-weight:bold;letter-spacing:-0.730px;">MPP2</span>
<div style="left:25px;top:76px;width:703px;height:1px;background:#a0a0a0;"></div>
<div style="left:25px;top:77px;width:703px;height:1px;background:#fff;"></div>
<span id="t74" class="t" style="left:25px;top:81px;font-size:12px;line-height:16px;color:#989898;font-weight:bold;text-decoration:underline;letter-spacing:-0.214px;text-shadow:1px 1px 0 #fff;">IGNORE</span>
<span id="t75" class="t" style="left:113px;top:81px;font-size:12px;line-height:16px;color:#989898;font-weight:bold;text-decoration:underline;letter-spacing:-0.339px;text-shadow:1px 1px 0 #fff;">BUCKET</span>
<span id="t76" class="t" style="left:201px;top:81px;font-size:12px;line-height:16px;color:#989898;font-weight:bold;text-decoration:underline;letter-spacing:-0.229px;text-shadow:1px 1px 0 #fff;">LCBUCKET</span>
<span id="t77" class="t" style="left:289px;top:81px;font-size:12px;line-height:16px;color:#989898;font-weight:bold;text-decoration:underline;letter-spacing:0.043px;text-shadow:1px 1px 0 #fff;">NS2TRACK</span>
<span id="t78" class="t" style="left:377px;top:81px;font-size:12px;line-height:16px;color:#989898;font-weight:bold;text-decoration:underline;letter-spacing:0.062px;text-shadow:1px 1px 0 #fff;">INITITER</span>
<span id="t79" class="t" style="left:465px;top:81px;font-size:12px;line-height:16px;color:#989898;font-weight:bold;text-decoration:underline;letter-spacing:0.516px;text-shadow:1px 1px 0 #fff;">PARMAX</span>
<span id="t80" class="t" style="left:553px;top:81px;font-size:12px;line-height:16px;color:#989898;font-weight:bold;text-decoration:underline;letter-spacing:-0.448px;text-shadow:1px 1px 0 #fff;">UNUSED</span>
<span id="t81" class="t" style="left:641px;top:81px;font-size:12px;line-height:16px;color:#989898;font-weight:bold;text-decoration:underline;letter-spacing:0.555px;text-shadow:1px 1px 0 #fff;">CPARM8</span>
<div style="left:25px;top:104px;width:87px;height:23px;background:#f0f0f0;box-shadow:inset 1px 1px 0 #a0a0a0,inset 2px 2px 0 #696969,inset -1px -1px 0 #fff;"></div>
<span id="t82" class="t" style="left:29.5px;top:107px;font-size:13px;line-height:16px;color:#808080;font-weight:bold;letter-spacing:-0.25px;">0</span>
<div style="left:113px;top:104px;width:87px;height:23px;background:#f0f0f0;box-shadow:inset 1px 1px 0 #a0a0a0,inset 2px 2px 0 #696969,inset -1px -1px 0 #fff;"></div>
<span id="t83" class="t" style="left:117.5px;top:107px;font-size:13px;line-height:16px;color:#808080;font-weight:bold;letter-spacing:-0.25px;">200</span>
<div style="left:201px;top:104px;width:87px;height:23px;background:#f0f0f0;box-shadow:inset 1px 1px 0 #a0a0a0,inset 2px 2px 0 #696969,inset -1px -1px 0 #fff;"></div>
<div style="left:289px;top:104px;width:87px;height:23px;background:#f0f0f0;box-shadow:inset 1px 1px 0 #a0a0a0,inset 2px 2px 0 #696969,inset -1px -1px 0 #fff;"></div>
<span id="t84" class="t" style="left:293.5px;top:107px;font-size:13px;line-height:16px;color:#808080;font-weight:bold;letter-spacing:-0.25px;">3</span>
<div style="left:377px;top:104px;width:87px;height:23px;background:#f0f0f0;box-shadow:inset 1px 1px 0 #a0a0a0,inset 2px 2px 0 #696969,inset -1px -1px 0 #fff;"></div>
<span id="t85" class="t" style="left:381.5px;top:107px;font-size:13px;line-height:16px;color:#808080;font-weight:bold;letter-spacing:-0.25px;">2</span>
<div style="left:465px;top:104px;width:87px;height:23px;background:#f0f0f0;box-shadow:inset 1px 1px 0 #a0a0a0,inset 2px 2px 0 #696969,inset -1px -1px 0 #fff;"></div>
<span id="t86" class="t" style="left:469.5px;top:107px;font-size:13px;line-height:16px;color:#808080;font-weight:bold;letter-spacing:-0.25px;">1.0005</span>
<div style="left:553px;top:104px;width:87px;height:23px;background:#f0f0f0;box-shadow:inset 1px 1px 0 #a0a0a0,inset 2px 2px 0 #696969,inset -1px -1px 0 #fff;"></div>
<div style="left:641px;top:105px;width:87px;height:21px;background:#f0f0f0;box-shadow:inset 1px 1px 0 #a0a0a0,inset 2px 2px 0 #696969,inset -1px -1px 0 #fff;"></div>
<div style="left:710px;top:107px;width:16px;height:18px;background:#f0f0f0;box-shadow:inset 1px 1px 0 #fff,inset -1px -1px 0 #696969,inset -2px -2px 0 #a0a0a0;"></div>
<svg style="left:713px;top:112px;" width="10" height="8" viewBox="0 0 10 8"><path d="M1 2 L9 2 L5 6 Z" fill="#a0a0a0"/></svg>
<span id="t87" class="t" style="left:645px;top:109.4px;font-size:13px;line-height:16px;color:#808080;font-weight:bold;">0</span>
<span id="t88" class="t" style="left:25px;top:136px;font-size:12px;line-height:16px;color:#989898;font-weight:bold;text-decoration:underline;letter-spacing:-0.448px;text-shadow:1px 1px 0 #fff;">UNUSED</span>
<span id="t89" class="t" style="left:113px;top:136px;font-size:12px;line-height:16px;color:#989898;font-weight:bold;text-decoration:underline;letter-spacing:-0.161px;text-shadow:1px 1px 0 #fff;">CHKSEGS</span>
<span id="t90" class="t" style="left:201px;top:136px;font-size:12px;line-height:16px;color:#989898;font-weight:bold;text-decoration:underline;letter-spacing:-0.497px;text-shadow:1px 1px 0 #fff;">PENSF</span>
<span id="t91" class="t" style="left:289px;top:136px;font-size:12px;line-height:16px;color:#989898;font-weight:bold;text-decoration:underline;letter-spacing:0.167px;text-shadow:1px 1px 0 #fff;">GRPABLE</span>
<div style="left:25px;top:159px;width:87px;height:23px;background:#f0f0f0;box-shadow:inset 1px 1px 0 #a0a0a0,inset 2px 2px 0 #696969,inset -1px -1px 0 #fff;"></div>
<div style="left:113px;top:159px;width:87px;height:23px;background:#f0f0f0;box-shadow:inset 1px 1px 0 #a0a0a0,inset 2px 2px 0 #696969,inset -1px -1px 0 #fff;"></div>
<span id="t92" class="t" style="left:117.5px;top:162px;font-size:13px;line-height:16px;color:#808080;font-weight:bold;letter-spacing:-0.25px;">0</span>
<div style="left:201px;top:159px;width:87px;height:23px;background:#f0f0f0;box-shadow:inset 1px 1px 0 #a0a0a0,inset 2px 2px 0 #696969,inset -1px -1px 0 #fff;"></div>
<span id="t93" class="t" style="left:205.5px;top:162px;font-size:13px;line-height:16px;color:#808080;font-weight:bold;letter-spacing:-0.25px;">1.0</span>
<div style="left:289px;top:159px;width:87px;height:23px;background:#f0f0f0;box-shadow:inset 1px 1px 0 #a0a0a0,inset 2px 2px 0 #696969,inset -1px -1px 0 #fff;"></div>
<span id="t94" class="t" style="left:293.5px;top:162px;font-size:13px;line-height:16px;color:#808080;font-weight:bold;letter-spacing:-0.25px;">0</span>
<span id="t95" class="t" style="left:5px;top:191px;font-size:13px;line-height:16px;color:#000;font-weight:bold;">1</span>
<span id="t96" class="t" style="left:25px;top:191px;font-size:12px;line-height:16px;color:#0000ff;font-weight:bold;text-decoration:underline;letter-spacing:0.500px;">SSID</span>
<span id="t97" class="t" style="left:113px;top:191px;font-size:12px;line-height:16px;color:#0000ff;font-weight:bold;text-decoration:underline;letter-spacing:0.375px;">MSID</span>
<span id="t98" class="t" style="left:201px;top:191px;font-size:12px;line-height:16px;color:#0000ff;font-weight:bold;text-decoration:underline;letter-spacing:-0.022px;">SSTYP</span>
<span id="t99" class="t" style="left:289px;top:191px;font-size:12px;line-height:16px;color:#0000ff;font-weight:bold;text-decoration:underline;letter-spacing:-0.125px;">MSTYP</span>
<span id="t100" class="t" style="left:377px;top:191px;font-size:12px;line-height:16px;color:#0000ff;font-weight:bold;text-decoration:underline;letter-spacing:0.156px;">SBOXID</span>
<span id="t101" class="t" style="left:465px;top:191px;font-size:12px;line-height:16px;color:#0000ff;font-weight:bold;text-decoration:underline;letter-spacing:0.161px;">MBOXID</span>
<span id="t102" class="t" style="left:553px;top:191px;font-size:12px;line-height:16px;color:#0000ff;font-weight:bold;text-decoration:underline;letter-spacing:0.333px;">SPR</span>
<span id="t103" class="t" style="left:641px;top:191px;font-size:12px;line-height:16px;color:#0000ff;font-weight:bold;text-decoration:underline;letter-spacing:0.339px;">MPR</span>
<div style="left:25px;top:214px;width:72px;height:23px;background:#c7edcc;box-shadow:inset 1px 1px 0 #a0a0a0,inset 2px 2px 0 #696969,inset -1px -1px 0 #fff;"></div>
<span id="t104" class="t" style="left:29.5px;top:217px;font-size:13px;line-height:16px;color:#000;font-weight:bold;letter-spacing:-0.25px;">1738</span>
<div style="left:98px;top:208px;width:15px;height:36px;background:#f0f0f0;box-shadow:inset 1px 1px 0 #fff,inset -1px -1px 0 #696969,inset -2px -2px 0 #a0a0a0;"></div>
<svg style="left:101px;top:222px;" width="9" height="9" viewBox="0 0 9 9"><circle cx="4.3" cy="3.9" r="3.3" fill="#000"/></svg>
<div style="left:113px;top:214px;width:72px;height:23px;background:#c7edcc;box-shadow:inset 1px 1px 0 #a0a0a0,inset 2px 2px 0 #696969,inset -1px -1px 0 #fff;"></div>
<span id="t105" class="t" style="left:117.5px;top:217px;font-size:13px;line-height:16px;color:#000;font-weight:bold;letter-spacing:-0.25px;">1000013</span>
<div style="left:186px;top:208px;width:15px;height:36px;background:#f0f0f0;box-shadow:inset 1px 1px 0 #fff,inset -1px -1px 0 #696969,inset -2px -2px 0 #a0a0a0;"></div>
<svg style="left:189px;top:222px;" width="9" height="9" viewBox="0 0 9 9"><circle cx="4.3" cy="3.9" r="3.3" fill="#000"/></svg>
<div style="left:201px;top:215px;width:87px;height:21px;background:#c7edcc;box-shadow:inset 1px 1px 0 #a0a0a0,inset 2px 2px 0 #696969,inset -1px -1px 0 #fff;"></div>
<div style="left:270px;top:217px;width:16px;height:18px;background:#f0f0f0;box-shadow:inset 1px 1px 0 #fff,inset -1px -1px 0 #696969,inset -2px -2px 0 #a0a0a0;"></div>
<svg style="left:273px;top:222px;" width="10" height="8" viewBox="0 0 10 8"><path d="M1 2 L9 2 L5 6 Z" fill="#000"/></svg>
<span id="t106" class="t" style="left:205px;top:219.4px;font-size:13px;line-height:16px;color:#0000ff;font-weight:bold;">3</span>
<div style="left:289px;top:215px;width:87px;height:21px;background:#c7edcc;box-shadow:inset 1px 1px 0 #a0a0a0,inset 2px 2px 0 #696969,inset -1px -1px 0 #fff;"></div>
<div style="left:358px;top:217px;width:16px;height:18px;background:#f0f0f0;box-shadow:inset 1px 1px 0 #fff,inset -1px -1px 0 #696969,inset -2px -2px 0 #a0a0a0;"></div>
<svg style="left:361px;top:222px;" width="10" height="8" viewBox="0 0 10 8"><path d="M1 2 L9 2 L5 6 Z" fill="#000"/></svg>
<span id="t107" class="t" style="left:293px;top:219.4px;font-size:13px;line-height:16px;color:#0000ff;font-weight:bold;">2</span>
<div style="left:377px;top:214px;width:72px;height:23px;background:#c7edcc;box-shadow:inset 1px 1px 0 #a0a0a0,inset 2px 2px 0 #696969,inset -1px -1px 0 #fff;"></div>
<span id="t108" class="t" style="left:381.5px;top:217px;font-size:13px;line-height:16px;color:#000;font-weight:bold;letter-spacing:-0.25px;">0</span>
<div style="left:450px;top:208px;width:15px;height:36px;background:#f0f0f0;box-shadow:inset 1px 1px 0 #fff,inset -1px -1px 0 #696969,inset -2px -2px 0 #a0a0a0;"></div>
<svg style="left:453px;top:222px;" width="9" height="9" viewBox="0 0 9 9"><circle cx="4.3" cy="3.9" r="3.3" fill="#000"/></svg>
<div style="left:465px;top:214px;width:72px;height:23px;background:#c7edcc;box-shadow:inset 1px 1px 0 #a0a0a0,inset 2px 2px 0 #696969,inset -1px -1px 0 #fff;"></div>
<span id="t109" class="t" style="left:469.5px;top:217px;font-size:13px;line-height:16px;color:#000;font-weight:bold;letter-spacing:-0.25px;">0</span>
<div style="left:538px;top:208px;width:15px;height:36px;background:#f0f0f0;box-shadow:inset 1px 1px 0 #fff,inset -1px -1px 0 #696969,inset -2px -2px 0 #a0a0a0;"></div>
<svg style="left:541px;top:222px;" width="9" height="9" viewBox="0 0 9 9"><circle cx="4.3" cy="3.9" r="3.3" fill="#000"/></svg>
<div style="left:553px;top:215px;width:87px;height:21px;background:#c7edcc;box-shadow:inset 1px 1px 0 #a0a0a0,inset 2px 2px 0 #696969,inset -1px -1px 0 #fff;"></div>
<div style="left:622px;top:217px;width:16px;height:18px;background:#f0f0f0;box-shadow:inset 1px 1px 0 #fff,inset -1px -1px 0 #696969,inset -2px -2px 0 #a0a0a0;"></div>
<svg style="left:625px;top:222px;" width="10" height="8" viewBox="0 0 10 8"><path d="M1 2 L9 2 L5 6 Z" fill="#000"/></svg>
<span id="t110" class="t" style="left:557px;top:219.4px;font-size:13px;line-height:16px;color:#000;font-weight:bold;">0</span>
<div style="left:641px;top:215px;width:87px;height:21px;background:#c7edcc;box-shadow:inset 1px 1px 0 #a0a0a0,inset 2px 2px 0 #696969,inset -1px -1px 0 #fff;"></div>
<div style="left:710px;top:217px;width:16px;height:18px;background:#f0f0f0;box-shadow:inset 1px 1px 0 #fff,inset -1px -1px 0 #696969,inset -2px -2px 0 #a0a0a0;"></div>
<svg style="left:713px;top:222px;" width="10" height="8" viewBox="0 0 10 8"><path d="M1 2 L9 2 L5 6 Z" fill="#000"/></svg>
<span id="t111" class="t" style="left:645px;top:219.4px;font-size:13px;line-height:16px;color:#000;font-weight:bold;">0</span>
<span id="t112" class="t" style="left:5px;top:246px;font-size:13px;line-height:16px;color:#000;font-weight:bold;">2</span>
<span id="t113" class="t" style="left:25px;top:246px;font-size:12px;line-height:16px;color:#0000ff;font-weight:bold;text-decoration:underline;letter-spacing:-0.578px;">FS</span>
<span id="t114" class="t" style="left:113px;top:246px;font-size:12px;line-height:16px;color:#0000ff;font-weight:bold;text-decoration:underline;letter-spacing:-0.672px;">FD</span>
<span id="t115" class="t" style="left:201px;top:246px;font-size:12px;line-height:16px;color:#0000ff;font-weight:bold;text-decoration:underline;letter-spacing:0.055px;">DC</span>
<span id="t116" class="t" style="left:289px;top:246px;font-size:12px;line-height:16px;color:#0000ff;font-weight:bold;text-decoration:underline;letter-spacing:-0.141px;">VC</span>
<span id="t117" class="t" style="left:377px;top:246px;font-size:12px;line-height:16px;color:#0000ff;font-weight:bold;text-decoration:underline;letter-spacing:-0.083px;">VDC</span>
<span id="t118" class="t" style="left:465px;top:246px;font-size:12px;line-height:16px;color:#0000ff;font-weight:bold;text-decoration:underline;letter-spacing:-0.276px;">PENCHK</span>
<span id="t119" class="t" style="left:553px;top:246px;font-size:12px;line-height:16px;color:#0000ff;font-weight:bold;text-decoration:underline;letter-spacing:-0.297px;">BT</span>
<span id="t120" class="t" style="left:641px;top:246px;font-size:12px;line-height:16px;color:#0000ff;font-weight:bold;text-decoration:underline;letter-spacing:-0.172px;">DT</span>
<div style="left:25px;top:269px;width:87px;height:23px;background:#c7edcc;box-shadow:inset 1px 1px 0 #a0a0a0,inset 2px 2px 0 #696969,inset -1px -1px 0 #fff;"></div>
<span id="t121" class="t" style="left:29.5px;top:272px;font-size:13px;line-height:16px;color:#0000ff;font-weight:bold;letter-spacing:-0.25px;">0.2</span>
<div style="left:113px;top:269px;width:87px;height:23px;background:#c7edcc;box-shadow:inset 1px 1px 0 #a0a0a0,inset 2px 2px 0 #696969,inset -1px -1px 0 #fff;"></div>
<span id="t122" class="t" style="left:117.5px;top:272px;font-size:13px;line-height:16px;color:#0000ff;font-weight:bold;letter-spacing:-0.25px;">0.2</span>
<div style="left:201px;top:269px;width:87px;height:23px;background:#c7edcc;box-shadow:inset 1px 1px 0 #a0a0a0,inset 2px 2px 0 #696969,inset -1px -1px 0 #fff;"></div>
<span id="t123" class="t" style="left:205.5px;top:272px;font-size:13px;line-height:16px;color:#000;font-weight:bold;letter-spacing:-0.25px;">0.0</span>
<div style="left:289px;top:269px;width:87px;height:23px;background:#c7edcc;box-shadow:inset 1px 1px 0 #a0a0a0,inset 2px 2px 0 #696969,inset -1px -1px 0 #fff;"></div>
<span id="t124" class="t" style="left:293.5px;top:272px;font-size:13px;line-height:16px;color:#000;font-weight:bold;letter-spacing:-0.25px;">0.0</span>
<div style="left:377px;top:269px;width:87px;height:23px;background:#c7edcc;box-shadow:inset 1px 1px 0 #a0a0a0,inset 2px 2px 0 #696969,inset -1px -1px 0 #fff;"></div>
<span id="t125" class="t" style="left:381.5px;top:272px;font-size:13px;line-height:16px;color:#0000ff;font-weight:bold;letter-spacing:-0.25px;">0.0</span>
<div style="left:465px;top:270px;width:87px;height:21px;background:#c7edcc;box-shadow:inset 1px 1px 0 #a0a0a0,inset 2px 2px 0 #696969,inset -1px -1px 0 #fff;"></div>
<div style="left:534px;top:272px;width:16px;height:18px;background:#f0f0f0;box-shadow:inset 1px 1px 0 #fff,inset -1px -1px 0 #696969,inset -2px -2px 0 #a0a0a0;"></div>
<svg style="left:537px;top:277px;" width="10" height="8" viewBox="0 0 10 8"><path d="M1 2 L9 2 L5 6 Z" fill="#000"/></svg>
<span id="t126" class="t" style="left:469px;top:274.4px;font-size:13px;line-height:16px;color:#0000ff;font-weight:bold;">1</span>
<div style="left:553px;top:269px;width:87px;height:23px;background:#c7edcc;box-shadow:inset 1px 1px 0 #a0a0a0,inset 2px 2px 0 #696969,inset -1px -1px 0 #fff;"></div>
<span id="t127" class="t" style="left:557.5px;top:272px;font-size:13px;line-height:16px;color:#000;font-weight:bold;letter-spacing:-0.25px;">0.0</span>
<div style="left:641px;top:269px;width:87px;height:23px;background:#c7edcc;box-shadow:inset 1px 1px 0 #a0a0a0,inset 2px 2px 0 #696969,inset -1px -1px 0 #fff;"></div>
<span id="t128" class="t" style="left:645.5px;top:272px;font-size:13px;line-height:16px;color:#0000ff;font-weight:bold;letter-spacing:-0.25px;">1000.00000</span>
<span id="t129" class="t" style="left:5px;top:301px;font-size:13px;line-height:16px;color:#000;font-weight:bold;">3</span>
<span id="t130" class="t" style="left:25px;top:301px;font-size:12px;line-height:16px;color:#0000ff;font-weight:bold;text-decoration:underline;letter-spacing:-0.312px;">SFS</span>
<span id="t131" class="t" style="left:113px;top:301px;font-size:12px;line-height:16px;color:#0000ff;font-weight:bold;text-decoration:underline;letter-spacing:-0.302px;">SFM</span>
<span id="t132" class="t" style="left:201px;top:301px;font-size:12px;line-height:16px;color:#0000ff;font-weight:bold;text-decoration:underline;letter-spacing:0.203px;">SST</span>
<span id="t133" class="t" style="left:289px;top:301px;font-size:12px;line-height:16px;color:#0000ff;font-weight:bold;text-decoration:underline;letter-spacing:0.036px;">MST</span>
<span id="t134" class="t" style="left:377px;top:301px;font-size:12px;line-height:16px;color:#0000ff;font-weight:bold;text-decoration:underline;letter-spacing:-0.324px;">SFST</span>
<span id="t135" class="t" style="left:465px;top:301px;font-size:12px;line-height:16px;color:#0000ff;font-weight:bold;text-decoration:underline;letter-spacing:-0.316px;">SFMT</span>
<span id="t136" class="t" style="left:553px;top:301px;font-size:12px;line-height:16px;color:#0000ff;font-weight:bold;text-decoration:underline;letter-spacing:-0.844px;">FSF</span>
<span id="t137" class="t" style="left:641px;top:301px;font-size:12px;line-height:16px;color:#0000ff;font-weight:bold;text-decoration:underline;letter-spacing:-0.505px;">VSF</span>
<div style="left:25px;top:324px;width:87px;height:23px;background:#c7edcc;box-shadow:inset 1px 1px 0 #a0a0a0,inset 2px 2px 0 #696969,inset -1px -1px 0 #fff;"></div>
<span id="t138" class="t" style="left:29.5px;top:327px;font-size:13px;line-height:16px;color:#000;font-weight:bold;letter-spacing:-0.25px;">1.0000000</span>
<div style="left:113px;top:324px;width:87px;height:23px;background:#c7edcc;box-shadow:inset 1px 1px 0 #a0a0a0,inset 2px 2px 0 #696969,inset -1px -1px 0 #fff;"></div>
<span id="t139" class="t" style="left:117.5px;top:327px;font-size:13px;line-height:16px;color:#000;font-weight:bold;letter-spacing:-0.25px;">1.0000000</span>
<div style="left:201px;top:324px;width:87px;height:23px;background:#c7edcc;box-shadow:inset 1px 1px 0 #a0a0a0,inset 2px 2px 0 #696969,inset -1px -1px 0 #fff;"></div>
<span id="t140" class="t" style="left:205.5px;top:327px;font-size:13px;line-height:16px;color:#000;font-weight:bold;letter-spacing:-0.25px;">0.0</span>
<div style="left:289px;top:324px;width:87px;height:23px;background:#c7edcc;box-shadow:inset 1px 1px 0 #a0a0a0,inset 2px 2px 0 #696969,inset -1px -1px 0 #fff;"></div>
<span id="t141" class="t" style="left:293.5px;top:327px;font-size:13px;line-height:16px;color:#000;font-weight:bold;letter-spacing:-0.25px;">0.0</span>
<div style="left:377px;top:324px;width:87px;height:23px;background:#c7edcc;box-shadow:inset 1px 1px 0 #a0a0a0,inset 2px 2px 0 #696969,inset -1px -1px 0 #fff;"></div>
<span id="t142" class="t" style="left:381.5px;top:327px;font-size:13px;line-height:16px;color:#000;font-weight:bold;letter-spacing:-0.25px;">1.0000000</span>
<div style="left:465px;top:324px;width:87px;height:23px;background:#c7edcc;box-shadow:inset 1px 1px 0 #a0a0a0,inset 2px 2px 0 #696969,inset -1px -1px 0 #fff;"></div>
<span id="t143" class="t" style="left:469.5px;top:327px;font-size:13px;line-height:16px;color:#000;font-weight:bold;letter-spacing:-0.25px;">1.0000000</span>
<div style="left:553px;top:324px;width:87px;height:23px;background:#c7edcc;box-shadow:inset 1px 1px 0 #a0a0a0,inset 2px 2px 0 #696969,inset -1px -1px 0 #fff;"></div>
<span id="t144" class="t" style="left:557.5px;top:327px;font-size:13px;line-height:16px;color:#000;font-weight:bold;letter-spacing:-0.25px;">1.0000000</span>
<div style="left:641px;top:324px;width:87px;height:23px;background:#c7edcc;box-shadow:inset 1px 1px 0 #a0a0a0,inset 2px 2px 0 #696969,inset -1px -1px 0 #fff;"></div>
<span id="t145" class="t" style="left:645.5px;top:327px;font-size:13px;line-height:16px;color:#000;font-weight:bold;letter-spacing:-0.25px;">1.0000000</span>
<div style="left:23px;top:366px;width:13px;height:13px;background:#c7edcc;box-shadow:inset 1px 1px 0 #a0a0a0,inset 2px 2px 0 #696969,inset -1px -1px 0 #fff,inset -2px -2px 0 #e3e3e3;"></div>
<span id="t146" class="t" style="left:42px;top:365px;font-size:13px;line-height:16px;color:#000;font-weight:bold;letter-spacing:-0.873px;">Thermal</span>
<div style="left:116px;top:366px;width:13px;height:13px;background:#c7edcc;box-shadow:inset 1px 1px 0 #a0a0a0,inset 2px 2px 0 #696969,inset -1px -1px 0 #fff,inset -2px -2px 0 #e3e3e3;"></div>
<span id="t147" class="t" style="left:135px;top:365px;font-size:13px;line-height:16px;color:#000;font-weight:bold;letter-spacing:-0.466px;">T_Friction</span>
<div style="left:204px;top:366px;width:13px;height:13px;background:#c7edcc;box-shadow:inset 1px 1px 0 #a0a0a0,inset 2px 2px 0 #696969,inset -1px -1px 0 #fff,inset -2px -2px 0 #e3e3e3;"></div>
<svg style="left:204px;top:366px;" width="13" height="13" viewBox="0 0 13 13"><path d="M3 5 L5.5 7.5 L10 3 L10 6 L5.5 10.5 L3 8 Z" fill="#000"/></svg>
<span id="t148" class="t" style="left:223px;top:365px;font-size:13px;line-height:16px;color:#000;font-weight:bold;letter-spacing:-0.062px;">A</span>
<div style="left:292px;top:366px;width:13px;height:13px;background:#c7edcc;box-shadow:inset 1px 1px 0 #a0a0a0,inset 2px 2px 0 #696969,inset -1px -1px 0 #fff,inset -2px -2px 0 #e3e3e3;"></div>
<span id="t149" class="t" style="left:311px;top:365px;font-size:13px;line-height:16px;color:#000;font-weight:bold;letter-spacing:0.016px;">AB</span>
<div style="left:380px;top:366px;width:13px;height:13px;background:#c7edcc;box-shadow:inset 1px 1px 0 #a0a0a0,inset 2px 2px 0 #696969,inset -1px -1px 0 #fff,inset -2px -2px 0 #e3e3e3;"></div>
<span id="t150" class="t" style="left:399px;top:365px;font-size:13px;line-height:16px;color:#000;font-weight:bold;letter-spacing:-0.182px;">ABC</span>
<div style="left:468px;top:366px;width:13px;height:13px;background:#c7edcc;box-shadow:inset 1px 1px 0 #a0a0a0,inset 2px 2px 0 #696969,inset -1px -1px 0 #fff,inset -2px -2px 0 #e3e3e3;"></div>
<span id="t151" class="t" style="left:487px;top:365px;font-size:13px;line-height:16px;color:#000;font-weight:bold;letter-spacing:-0.316px;">ABCD</span>
<div style="left:25px;top:383px;width:703px;height:1px;background:#a0a0a0;"></div>
<div style="left:25px;top:384px;width:703px;height:1px;background:#fff;"></div>
<span id="t152" class="t" style="left:25px;top:396px;font-size:12px;line-height:16px;color:#989898;font-weight:bold;text-decoration:underline;letter-spacing:-0.656px;text-shadow:1px 1px 0 #fff;">CF</span>
<span id="t153" class="t" style="left:113px;top:396px;font-size:12px;line-height:16px;color:#989898;font-weight:bold;text-decoration:underline;letter-spacing:-0.004px;text-shadow:1px 1px 0 #fff;">FRAD</span>
<span id="t154" class="t" style="left:201px;top:396px;font-size:12px;line-height:16px;color:#989898;font-weight:bold;text-decoration:underline;letter-spacing:-0.109px;text-shadow:1px 1px 0 #fff;">HTC</span>
<span id="t155" class="t" style="left:289px;top:396px;font-size:12px;line-height:16px;color:#989898;font-weight:bold;text-decoration:underline;letter-spacing:0.103px;text-shadow:1px 1px 0 #fff;">GCRIT</span>
<span id="t156" class="t" style="left:377px;top:396px;font-size:12px;line-height:16px;color:#989898;font-weight:bold;text-decoration:underline;letter-spacing:-0.074px;text-shadow:1px 1px 0 #fff;">GMAX</span>
<span id="t157" class="t" style="left:465px;top:396px;font-size:12px;line-height:16px;color:#989898;font-weight:bold;text-decoration:underline;letter-spacing:0.438px;text-shadow:1px 1px 0 #fff;">CD_FACT</span>
<span id="t158" class="t" style="left:553px;top:396px;font-size:12px;line-height:16px;color:#989898;font-weight:bold;text-decoration:underline;letter-spacing:0.055px;text-shadow:1px 1px 0 #fff;">BC_FLG</span>
<span id="t159" class="t" style="left:641px;top:396px;font-size:12px;line-height:16px;color:#989898;font-weight:bold;text-decoration:underline;letter-spacing:-0.070px;text-shadow:1px 1px 0 #fff;">ALGO</span>
<div style="left:25px;top:419px;width:87px;height:23px;background:#f0f0f0;box-shadow:inset 1px 1px 0 #a0a0a0,inset 2px 2px 0 #696969,inset -1px -1px 0 #fff;"></div>
<div style="left:113px;top:419px;width:87px;height:23px;background:#f0f0f0;box-shadow:inset 1px 1px 0 #a0a0a0,inset 2px 2px 0 #696969,inset -1px -1px 0 #fff;"></div>
<div style="left:201px;top:419px;width:87px;height:23px;background:#f0f0f0;box-shadow:inset 1px 1px 0 #a0a0a0,inset 2px 2px 0 #696969,inset -1px -1px 0 #fff;"></div>
<div style="left:289px;top:419px;width:87px;height:23px;background:#f0f0f0;box-shadow:inset 1px 1px 0 #a0a0a0,inset 2px 2px 0 #696969,inset -1px -1px 0 #fff;"></div>
<div style="left:377px;top:419px;width:87px;height:23px;background:#f0f0f0;box-shadow:inset 1px 1px 0 #a0a0a0,inset 2px 2px 0 #696969,inset -1px -1px 0 #fff;"></div>
<div style="left:465px;top:419px;width:87px;height:23px;background:#f0f0f0;box-shadow:inset 1px 1px 0 #a0a0a0,inset 2px 2px 0 #696969,inset -1px -1px 0 #fff;"></div>
<span id="t160" class="t" style="left:469.5px;top:422px;font-size:13px;line-height:16px;color:#808080;font-weight:bold;letter-spacing:-0.25px;">1.0</span>
<div style="left:553px;top:419px;width:87px;height:23px;background:#f0f0f0;box-shadow:inset 1px 1px 0 #a0a0a0,inset 2px 2px 0 #696969,inset -1px -1px 0 #fff;"></div>
<div style="left:641px;top:419px;width:87px;height:23px;background:#f0f0f0;box-shadow:inset 1px 1px 0 #a0a0a0,inset 2px 2px 0 #696969,inset -1px -1px 0 #fff;"></div>
<span id="t161" class="t" style="left:25px;top:451px;font-size:12px;line-height:16px;color:#989898;font-weight:bold;text-decoration:underline;letter-spacing:-0.266px;text-shadow:1px 1px 0 #fff;">LCFST</span>
<span id="t162" class="t" style="left:113px;top:451px;font-size:12px;line-height:16px;color:#989898;font-weight:bold;text-decoration:underline;letter-spacing:-0.303px;text-shadow:1px 1px 0 #fff;">LCFDT</span>
<span id="t163" class="t" style="left:201px;top:451px;font-size:12px;line-height:16px;color:#989898;font-weight:bold;text-decoration:underline;letter-spacing:-0.089px;text-shadow:1px 1px 0 #fff;">FORMULA</span>
<span id="t164" class="t" style="left:289px;top:451px;font-size:12px;line-height:16px;color:#989898;font-weight:bold;text-decoration:underline;letter-spacing:-0.297px;text-shadow:1px 1px 0 #fff;">a</span>
<span id="t165" class="t" style="left:377px;top:451px;font-size:12px;line-height:16px;color:#989898;font-weight:bold;text-decoration:underline;letter-spacing:-0.734px;text-shadow:1px 1px 0 #fff;">b</span>
<span id="t166" class="t" style="left:465px;top:451px;font-size:12px;line-height:16px;color:#989898;font-weight:bold;text-decoration:underline;letter-spacing:-0.406px;text-shadow:1px 1px 0 #fff;">c</span>
<span id="t167" class="t" style="left:553px;top:451px;font-size:12px;line-height:16px;color:#989898;font-weight:bold;text-decoration:underline;letter-spacing:-0.734px;text-shadow:1px 1px 0 #fff;">d</span>
<div style="left:25px;top:474px;width:72px;height:23px;background:#f0f0f0;box-shadow:inset 1px 1px 0 #a0a0a0,inset 2px 2px 0 #696969,inset -1px -1px 0 #fff;"></div>
<div style="left:98px;top:468px;width:15px;height:36px;background:#f0f0f0;box-shadow:inset 1px 1px 0 #fff,inset -1px -1px 0 #696969,inset -2px -2px 0 #a0a0a0;"></div>
<svg style="left:101px;top:482px;" width="9" height="9" viewBox="0 0 9 9"><circle cx="4.3" cy="3.9" r="3.3" fill="#0000ff"/></svg>
<div style="left:113px;top:474px;width:72px;height:23px;background:#f0f0f0;box-shadow:inset 1px 1px 0 #a0a0a0,inset 2px 2px 0 #696969,inset -1px -1px 0 #fff;"></div>
<div style="left:186px;top:468px;width:15px;height:36px;background:#f0f0f0;box-shadow:inset 1px 1px 0 #fff,inset -1px -1px 0 #696969,inset -2px -2px 0 #a0a0a0;"></div>
<svg style="left:189px;top:482px;" width="9" height="9" viewBox="0 0 9 9"><circle cx="4.3" cy="3.9" r="3.3" fill="#0000ff"/></svg>
<div style="left:377px;top:474px;width:72px;height:23px;background:#f0f0f0;box-shadow:inset 1px 1px 0 #a0a0a0,inset 2px 2px 0 #696969,inset -1px -1px 0 #fff;"></div>
<div style="left:450px;top:468px;width:15px;height:36px;background:#f0f0f0;box-shadow:inset 1px 1px 0 #fff,inset -1px -1px 0 #696969,inset -2px -2px 0 #a0a0a0;"></div>
<svg style="left:453px;top:482px;" width="9" height="9" viewBox="0 0 9 9"><circle cx="4.3" cy="3.9" r="3.3" fill="#0000ff"/></svg>
<div style="left:465px;top:474px;width:72px;height:23px;background:#f0f0f0;box-shadow:inset 1px 1px 0 #a0a0a0,inset 2px 2px 0 #696969,inset -1px -1px 0 #fff;"></div>
<div style="left:538px;top:468px;width:15px;height:36px;background:#f0f0f0;box-shadow:inset 1px 1px 0 #fff,inset -1px -1px 0 #696969,inset -2px -2px 0 #a0a0a0;"></div>
<svg style="left:541px;top:482px;" width="9" height="9" viewBox="0 0 9 9"><circle cx="4.3" cy="3.9" r="3.3" fill="#0000ff"/></svg>
<div style="left:553px;top:474px;width:72px;height:23px;background:#f0f0f0;box-shadow:inset 1px 1px 0 #a0a0a0,inset 2px 2px 0 #696969,inset -1px -1px 0 #fff;"></div>
<div style="left:626px;top:468px;width:15px;height:36px;background:#f0f0f0;box-shadow:inset 1px 1px 0 #fff,inset -1px -1px 0 #696969,inset -2px -2px 0 #a0a0a0;"></div>
<svg style="left:629px;top:482px;" width="9" height="9" viewBox="0 0 9 9"><circle cx="4.3" cy="3.9" r="3.3" fill="#0000ff"/></svg>
<div style="left:201px;top:474px;width:87px;height:23px;background:#f0f0f0;box-shadow:inset 1px 1px 0 #a0a0a0,inset 2px 2px 0 #696969,inset -1px -1px 0 #fff;"></div>
<div style="left:289px;top:474px;width:87px;height:23px;background:#f0f0f0;box-shadow:inset 1px 1px 0 #a0a0a0,inset 2px 2px 0 #696969,inset -1px -1px 0 #fff;"></div>
<span id="t168" class="t" style="left:0px;top:506px;font-size:13px;line-height:16px;color:#000;font-weight:bold;">A</span>
<span id="t169" class="t" style="left:25px;top:506px;font-size:12px;line-height:16px;color:#0000ff;font-weight:bold;text-decoration:underline;letter-spacing:-0.426px;">SOFT</span>
<span id="t170" class="t" style="left:113px;top:506px;font-size:12px;line-height:16px;color:#0000ff;font-weight:bold;text-decoration:underline;letter-spacing:-0.151px;">SOFSCL</span>
<span id="t171" class="t" style="left:201px;top:506px;font-size:12px;line-height:16px;color:#0000ff;font-weight:bold;text-decoration:underline;letter-spacing:0.271px;">LCIDAB</span>
<span id="t172" class="t" style="left:289px;top:506px;font-size:12px;line-height:16px;color:#0000ff;font-weight:bold;text-decoration:underline;letter-spacing:0.516px;">MAXPAR</span>
<span id="t173" class="t" style="left:377px;top:506px;font-size:12px;line-height:16px;color:#0000ff;font-weight:bold;text-decoration:underline;letter-spacing:-0.091px;">SBOPT</span>
<span id="t174" class="t" style="left:465px;top:506px;font-size:12px;line-height:16px;color:#0000ff;font-weight:bold;text-decoration:underline;letter-spacing:-0.131px;">DEPTH</span>
<span id="t175" class="t" style="left:553px;top:506px;font-size:12px;line-height:16px;color:#0000ff;font-weight:bold;text-decoration:underline;letter-spacing:0.134px;">BSORT</span>
<span id="t176" class="t" style="left:641px;top:506px;font-size:12px;line-height:16px;color:#0000ff;font-weight:bold;text-decoration:underline;letter-spacing:-0.081px;">FRCFRQ</span>
<div style="left:25px;top:530px;width:87px;height:21px;background:#c7edcc;box-shadow:inset 1px 1px 0 #a0a0a0,inset 2px 2px 0 #696969,inset -1px -1px 0 #fff;"></div>
<div style="left:94px;top:532px;width:16px;height:18px;background:#f0f0f0;box-shadow:inset 1px 1px 0 #fff,inset -1px -1px 0 #696969,inset -2px -2px 0 #a0a0a0;"></div>
<svg style="left:97px;top:537px;" width="10" height="8" viewBox="0 0 10 8"><path d="M1 2 L9 2 L5 6 Z" fill="#000"/></svg>
<span id="t177" class="t" style="left:29px;top:534.4px;font-size:13px;line-height:16px;color:#000;font-weight:bold;">2</span>
<div style="left:113px;top:529px;width:87px;height:23px;background:#c7edcc;box-shadow:inset 1px 1px 0 #a0a0a0,inset 2px 2px 0 #696969,inset -1px -1px 0 #fff;"></div>
<span id="t178" class="t" style="left:117.5px;top:532px;font-size:13px;line-height:16px;color:#000;font-weight:bold;letter-spacing:-0.25px;">0.0</span>
<div style="left:201px;top:529px;width:72px;height:23px;background:#c7edcc;box-shadow:inset 1px 1px 0 #a0a0a0,inset 2px 2px 0 #696969,inset -1px -1px 0 #fff;"></div>
<span id="t179" class="t" style="left:205.5px;top:532px;font-size:13px;line-height:16px;color:#000;font-weight:bold;letter-spacing:-0.25px;">0</span>
<div style="left:274px;top:523px;width:15px;height:36px;background:#f0f0f0;box-shadow:inset 1px 1px 0 #fff,inset -1px -1px 0 #696969,inset -2px -2px 0 #a0a0a0;"></div>
<svg style="left:277px;top:537px;" width="9" height="9" viewBox="0 0 9 9"><circle cx="4.3" cy="3.9" r="3.3" fill="#000"/></svg>
<div style="left:289px;top:529px;width:87px;height:23px;background:#c7edcc;box-shadow:inset 1px 1px 0 #a0a0a0,inset 2px 2px 0 #696969,inset -1px -1px 0 #fff;"></div>
<span id="t180" class="t" style="left:293.5px;top:532px;font-size:13px;line-height:16px;color:#000;font-weight:bold;letter-spacing:-0.25px;">0.0</span>
<div style="left:377px;top:530px;width:87px;height:21px;background:#c7edcc;box-shadow:inset 1px 1px 0 #a0a0a0,inset 2px 2px 0 #696969,inset -1px -1px 0 #fff;"></div>
<div style="left:446px;top:532px;width:16px;height:18px;background:#f0f0f0;box-shadow:inset 1px 1px 0 #fff,inset -1px -1px 0 #696969,inset -2px -2px 0 #a0a0a0;"></div>
<svg style="left:449px;top:537px;" width="10" height="8" viewBox="0 0 10 8"><path d="M1 2 L9 2 L5 6 Z" fill="#000"/></svg>
<span id="t181" class="t" style="left:381px;top:534.4px;font-size:13px;line-height:16px;color:#000;font-weight:bold;">0.0</span>
<div style="left:465px;top:529px;width:72px;height:23px;background:#c7edcc;box-shadow:inset 1px 1px 0 #a0a0a0,inset 2px 2px 0 #696969,inset -1px -1px 0 #fff;"></div>
<span id="t182" class="t" style="left:469.5px;top:532px;font-size:13px;line-height:16px;color:#000;font-weight:bold;letter-spacing:-0.25px;">0</span>
<div style="left:538px;top:523px;width:15px;height:36px;background:#f0f0f0;box-shadow:inset 1px 1px 0 #fff,inset -1px -1px 0 #696969,inset -2px -2px 0 #a0a0a0;"></div>
<svg style="left:541px;top:537px;" width="9" height="9" viewBox="0 0 9 9"><circle cx="4.3" cy="3.9" r="3.3" fill="#000"/></svg>
<div style="left:553px;top:529px;width:72px;height:23px;background:#c7edcc;box-shadow:inset 1px 1px 0 #a0a0a0,inset 2px 2px 0 #696969,inset -1px -1px 0 #fff;"></div>
<span id="t183" class="t" style="left:557.5px;top:532px;font-size:13px;line-height:16px;color:#000;font-weight:bold;letter-spacing:-0.25px;">0</span>
<div style="left:626px;top:523px;width:15px;height:36px;background:#f0f0f0;box-shadow:inset 1px 1px 0 #fff,inset -1px -1px 0 #696969,inset -2px -2px 0 #a0a0a0;"></div>
<svg style="left:629px;top:537px;" width="9" height="9" viewBox="0 0 9 9"><circle cx="4.3" cy="3.9" r="3.3" fill="#000"/></svg>
<div style="left:641px;top:529px;width:87px;height:23px;background:#c7edcc;box-shadow:inset 1px 1px 0 #a0a0a0,inset 2px 2px 0 #696969,inset -1px -1px 0 #fff;"></div>
<span id="t184" class="t" style="left:645.5px;top:532px;font-size:13px;line-height:16px;color:#000;font-weight:bold;letter-spacing:-0.25px;">0</span>
</div>
<div style="left:406px;top:741px;width:774px;height:84px;background:#c7edcc;box-shadow:inset 1px 1px 0 #a0a0a0,inset 2px 2px 0 #696969,inset -1px -1px 0 #fff;"></div>
<div style="left:1162px;top:743px;width:17px;height:81px;background:#f0f0f0;"></div>
<svg style="left:1166px;top:749px;" width="9" height="6" viewBox="0 0 9 6"><path d="M0.5 5.5 L4.5 1 L8.5 5.5 Z" fill="#808080"/></svg>
<svg style="left:1166px;top:813px;" width="9" height="6" viewBox="0 0 9 6"><path d="M0.5 0.5 L8.5 0.5 L4.5 5 Z" fill="#808080"/></svg>
<span id="t185" class="t" style="left:413px;top:744px;font-size:12px;line-height:16px;color:#000;font-weight:bold;letter-spacing:0.014px;">VDC :=Viscous damping coefficient in percent of critical. In order to avoid undesirable oscillation in contact, e.g., for</span>
<span id="t186" class="t" style="left:409px;top:758px;font-size:12px;line-height:16px;color:#000;font-weight:bold;letter-spacing:-0.001px;">sheet forming simulation, a contact damping perpendicular to the contacting surfaces is applied.</span>
<div style="left:1181px;top:28px;width:1px;height:799px;background:#b8b8b8;"></div>
<div style="left:1182px;top:28px;width:2px;height:799px;background:#787878;"></div>
<div style="left:1181px;top:29px;width:179px;height:2px;background:#808080;"></div>
<div style="left:1184px;top:31px;width:171px;height:776px;background:#c7edcc;"></div>
<div style="left:1355px;top:30px;width:4px;height:797px;background:#fff;"></div>
<div style="left:1184px;top:46px;width:171px;height:14px;background:#3399ff;"></div>
<span id="t187" class="t" style="left:1186.5px;top:32px;font-size:13px;line-height:16px;color:#000;font-weight:bold;">1</span>
<span id="t188" class="t" style="left:1206.5px;top:32px;font-size:13px;line-height:16px;color:#000;font-weight:bold;letter-spacing:-0.609px;">(0)</span>
<span id="t189" class="t" style="left:1186.5px;top:46px;font-size:13px;line-height:16px;color:#fff;font-weight:bold;">2</span>
<span id="t190" class="t" style="left:1206.5px;top:46px;font-size:13px;line-height:16px;color:#fff;font-weight:bold;letter-spacing:-0.609px;">(0)</span>
<span id="t191" class="t" style="left:1186.5px;top:60px;font-size:13px;line-height:16px;color:#000;font-weight:bold;">3</span>
<span id="t192" class="t" style="left:1206.5px;top:60px;font-size:13px;line-height:16px;color:#000;font-weight:bold;letter-spacing:-0.609px;">(0)</span>
<span id="t193" class="t" style="left:1186.5px;top:74px;font-size:13px;line-height:16px;color:#000;font-weight:bold;">4</span>
<span id="t194" class="t" style="left:1206.5px;top:74px;font-size:13px;line-height:16px;color:#000;font-weight:bold;letter-spacing:-0.609px;">(0)</span>
<span id="t195" class="t" style="left:1186.5px;top:88px;font-size:13px;line-height:16px;color:#000;font-weight:bold;">5</span>
<span id="t196" class="t" style="left:1206.5px;top:88px;font-size:13px;line-height:16px;color:#000;font-weight:bold;letter-spacing:-0.609px;">(0)</span>
<div style="left:1184px;top:807px;width:171px;height:18px;background:#f0f0f0;"></div>
<svg style="left:1189px;top:811px;" width="6" height="9" viewBox="0 0 6 9"><path d="M5.5 0.5 L5.5 8.5 L1 4.5 Z" fill="#404040"/></svg>
<svg style="left:1344px;top:811px;" width="6" height="9" viewBox="0 0 6 9"><path d="M0.5 0.5 L0.5 8.5 L5 4.5 Z" fill="#404040"/></svg>
<div style="left:1202px;top:809px;width:70px;height:14px;border:1px solid #979797;border-radius:2px;background:linear-gradient(to bottom,#f4f4f4 0,#e6e6e8 45%,#cfcfd3 55%,#dcdce0 100%);"></div>
<div style="left:1233px;top:812px;width:1px;height:8px;background:#606060;"></div>
<div style="left:1236px;top:812px;width:1px;height:8px;background:#606060;"></div>
<div style="left:1239px;top:812px;width:1px;height:8px;background:#606060;"></div>
<svg style="left:409px;top:32px;" width="62" height="39" viewBox="0 0 62 39"><ellipse cx="31.0" cy="19.5" rx="28.5" ry="17.0" fill="none" stroke="#ed1c24" stroke-width="5"/></svg>
<span id="t197" class="t" style="left:430px;top:76px;font-size:13px;line-height:16px;color:#ed1c24;font-weight:bold;">4</span>
<svg style="left:903px;top:33px;" width="65.5" height="35.5" viewBox="0 0 65.5 35.5"><ellipse cx="32.75" cy="17.75" rx="30.25" ry="15.25" fill="none" stroke="#ed1c24" stroke-width="5"/></svg>
<span id="t198" class="t" style="left:928px;top:80px;font-size:13px;line-height:16px;color:#ed1c24;font-weight:bold;">18</span>
<svg style="left:1112px;top:31.5px;" width="62" height="36.5" viewBox="0 0 62 36.5"><ellipse cx="31.0" cy="18.25" rx="28.5" ry="15.75" fill="none" stroke="#ed1c24" stroke-width="5"/></svg>
<span id="t199" class="t" style="left:1126px;top:71px;font-size:13px;line-height:16px;color:#ed1c24;font-weight:bold;">19</span>
<div style="left:1174px;top:39px;width:64px;height:30px;border:5px solid #ed1c24;box-sizing:border-box;"></div>
<span id="t200" class="t" style="left:1245.5px;top:63px;font-size:13px;line-height:16px;color:#ed1c24;font-weight:bold;">3</span>
<div style="left:514px;top:177px;width:159px;height:35px;border:5px solid #ed1c24;box-sizing:border-box;"></div>
<span id="t201" class="t" style="left:685px;top:192px;font-size:13px;line-height:16px;color:#ed1c24;font-weight:bold;">5</span>
<svg style="left:597px;top:342px;" width="58.5" height="32" viewBox="0 0 58.5 32"><ellipse cx="29.25" cy="16.0" rx="26.75" ry="13.5" fill="none" stroke="#ed1c24" stroke-width="5"/></svg>
<span id="t202" class="t" style="left:659px;top:349px;font-size:13px;line-height:16px;color:#ed1c24;font-weight:bold;">6</span>
<svg style="left:683px;top:341px;" width="66" height="31" viewBox="0 0 66 31"><ellipse cx="33.0" cy="15.5" rx="30.5" ry="13.0" fill="none" stroke="#ed1c24" stroke-width="5"/></svg>
<span id="t203" class="t" style="left:755px;top:351px;font-size:13px;line-height:16px;color:#ed1c24;font-weight:bold;">7</span>
<svg style="left:424px;top:367px;" width="94.5" height="36.5" viewBox="0 0 94.5 36.5"><ellipse cx="47.25" cy="18.25" rx="44.75" ry="15.75" fill="none" stroke="#ed1c24" stroke-width="5"/></svg>
<span id="t204" class="t" style="left:470px;top:352px;font-size:13px;line-height:16px;color:#ed1c24;font-weight:bold;">8</span>
<svg style="left:514px;top:368px;" width="94.5" height="33.5" viewBox="0 0 94.5 33.5"><ellipse cx="47.25" cy="16.75" rx="44.75" ry="14.25" fill="none" stroke="#ed1c24" stroke-width="5"/></svg>
<span id="t205" class="t" style="left:557px;top:355px;font-size:13px;line-height:16px;color:#ed1c24;font-weight:bold;">9</span>
<svg style="left:420px;top:419px;" width="49" height="37" viewBox="0 0 49 37"><ellipse cx="24.5" cy="18.5" rx="22.0" ry="16.0" fill="none" stroke="#ed1c24" stroke-width="5"/></svg>
<span id="t206" class="t" style="left:469px;top:451px;font-size:13px;line-height:16px;color:#ed1c24;font-weight:bold;">10</span>
<svg style="left:511px;top:421px;" width="45" height="34" viewBox="0 0 45 34"><ellipse cx="22.5" cy="17.0" rx="20.0" ry="14.5" fill="none" stroke="#ed1c24" stroke-width="5"/></svg>
<span id="t207" class="t" style="left:559px;top:444px;font-size:13px;line-height:16px;color:#ed1c24;font-weight:bold;">11</span>
<svg style="left:777px;top:421.5px;" width="41" height="32.5" viewBox="0 0 41 32.5"><ellipse cx="20.5" cy="16.25" rx="18.0" ry="13.75" fill="none" stroke="#ed1c24" stroke-width="5"/></svg>
<span id="t208" class="t" style="left:823px;top:443px;font-size:13px;line-height:16px;color:#ed1c24;font-weight:bold;">12</span>
<svg style="left:954px;top:423.5px;" width="39" height="31.0" viewBox="0 0 39 31.0"><ellipse cx="19.5" cy="15.5" rx="17.0" ry="13.0" fill="none" stroke="#ed1c24" stroke-width="5"/></svg>
<span id="t209" class="t" style="left:998px;top:444px;font-size:13px;line-height:16px;color:#ed1c24;font-weight:bold;">13</span>
<div style="left:426px;top:479px;width:84px;height:28px;border:5px solid #ed1c24;box-sizing:border-box;"></div>
<span id="t210" class="t" style="left:454.5px;top:511px;font-size:13px;line-height:16px;color:#ed1c24;font-weight:bold;">14</span>
<div style="left:514px;top:478px;width:85px;height:29px;border:5px solid #ed1c24;box-sizing:border-box;"></div>
<span id="t211" class="t" style="left:538.5px;top:512px;font-size:13px;line-height:16px;color:#ed1c24;font-weight:bold;">15</span>
<svg style="left:602px;top:511px;" width="49" height="38" viewBox="0 0 49 38"><ellipse cx="24.5" cy="19.0" rx="22.0" ry="16.5" fill="none" stroke="#ed1c24" stroke-width="5"/></svg>
<span id="t212" class="t" style="left:658px;top:535px;font-size:13px;line-height:16px;color:#ed1c24;font-weight:bold;">16</span>
<div style="left:412px;top:684px;width:52px;height:31px;border:5px solid #ed1c24;box-sizing:border-box;"></div>
<span id="t213" class="t" style="left:474.5px;top:715px;font-size:13px;line-height:16px;color:#ed1c24;font-weight:bold;">17</span>
</div></body></html>
